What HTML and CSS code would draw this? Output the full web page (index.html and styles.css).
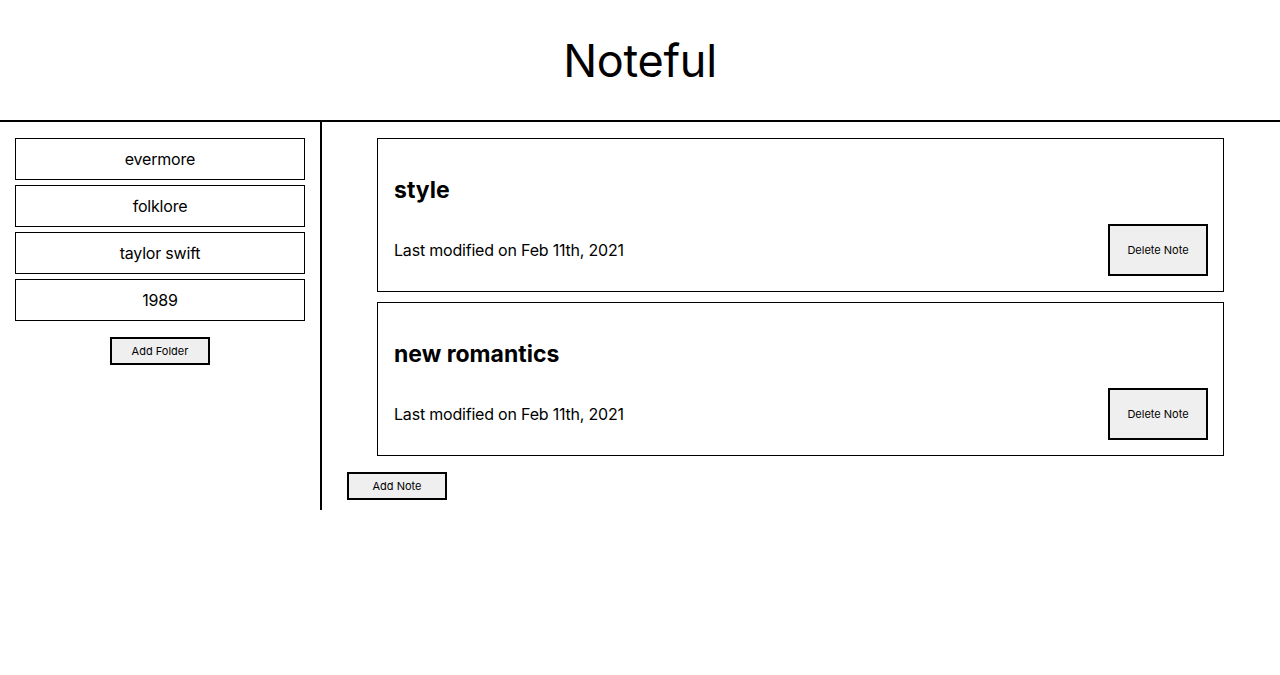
FILE: index.html
```html
<!DOCTYPE html>
<html>
<head>
<meta charset="utf-8">
<title>Noteful</title>
<link rel="stylesheet" href="styles.css">
</head>
<body>
<header class="app-header"><h1 class="app-title">Noteful</h1></header>
<div class="layout">
  <nav class="sidebar">
    <ul class="folder-list">
      <li class="folder">evermore</li>
      <li class="folder">folklore</li>
      <li class="folder">taylor swift</li>
      <li class="folder">1989</li>
    </ul>
    <button class="btn btn-small">Add Folder</button>
  </nav>
  <main class="main">
    <ul class="note-list">
      <li class="note">
        <h2 class="note-title">style</h2>
        <div class="note-row">
          <span class="note-date">Last modified on Feb 11th, 2021</span>
          <button class="btn btn-delete">Delete Note</button>
        </div>
      </li>
      <li class="note">
        <h2 class="note-title">new romantics</h2>
        <div class="note-row">
          <span class="note-date">Last modified on Feb 11th, 2021</span>
          <button class="btn btn-delete">Delete Note</button>
        </div>
      </li>
    </ul>
    <button class="btn btn-small btn-add-note">Add Note</button>
  </main>
</div>
</body>
</html>
```
FILE: styles.css
```css
* { box-sizing: border-box; }
body {
  margin: 0;
  font-family: Inter, "Noto Sans", sans-serif;
  color: #000;
  background: #fff;
}
.app-header {
  height: 122px;
  border-bottom: 2px solid #000;
  display: flex;
  align-items: center;
  justify-content: center;
}
.app-title {
  margin: 0;
  font-size: 45px;
  font-weight: 400;
  line-height: 1;
  letter-spacing: -0.3px;
}
.layout {
  display: flex;
  align-items: stretch;
}
.sidebar {
  width: 322px;
  flex: none;
  border-right: 2px solid #000;
  padding: 16px 15px 0 15px;
  display: flex;
  flex-direction: column;
  align-items: center;
}
.folder-list {
  list-style: none;
  margin: 0;
  padding: 0;
  width: 290px;
  display: flex;
  flex-direction: column;
  gap: 5px;
}
.folder {
  height: 42px;
  border: 1px solid #000;
  display: flex;
  align-items: center;
  justify-content: center;
  font-size: 16px;
  letter-spacing: -0.2px;
}
.btn {
  font-family: Inter, "Noto Sans", sans-serif;
  background: #efefef;
  border: 2px solid #000;
  color: #000;
  font-size: 11px;
  padding: 0;
}
.btn-small {
  width: 100px;
  height: 28px;
  margin-top: 16px;
}
.main {
  flex: 1;
  padding: 16px 0 10px 0;
}
.note-list {
  list-style: none;
  margin: 0 56px 0 55px;
  padding: 0;
  display: flex;
  flex-direction: column;
  gap: 10px;
}
.note {
  height: 154px;
  border: 1px solid #000;
  padding: 37px 15px 15px 16px;
}
.note-title {
  margin: 0 0 20px 0;
  font-size: 23px;
  line-height: 28px;
  font-weight: 700;
}
.note-row {
  display: flex;
  align-items: center;
  justify-content: space-between;
  height: 52px;
}
.note-date {
  font-size: 16px;
  letter-spacing: -0.2px;
}
.btn-delete {
  width: 100px;
  height: 52px;
}
.btn-add-note {
  margin-left: 25px;
}
```
